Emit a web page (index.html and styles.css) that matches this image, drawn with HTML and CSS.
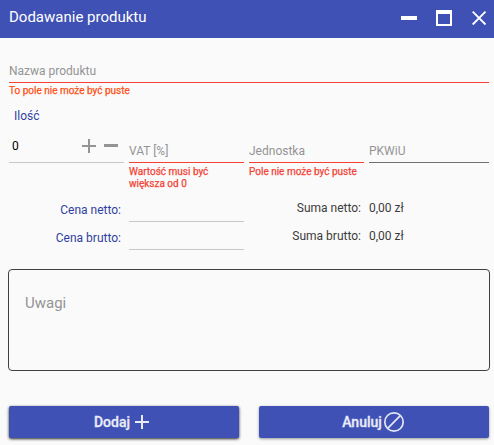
FILE: index.html
```html
<!DOCTYPE html>
<html lang="pl">
<head>
<meta charset="utf-8">
<title>Dodawanie produktu</title>
<link rel="stylesheet" href="styles.css">
</head>
<body>
<header class="titlebar">
  <h1>Dodawanie produktu</h1>
  <svg class="window-icons" width="90" height="20" viewBox="0 0 90 20" fill="none" stroke="#fff">
    <path d="M1 10h16" stroke-width="4"/>
    <path d="M37 4V17h14V4" stroke-width="2"/><path d="M36 4h16" stroke-width="4"/>
    <path d="M72.7 3.7l12.8 12.8M85.5 3.7l-12.8 12.8" stroke-width="1.8"/>
  </svg>
</header>
<main>
  <section class="name">
    <div class="control invalid"><span>Nazwa produktu</span></div>
    <p class="error orange">To pole nie może być puste</p>
  </section>
  <div class="quantity-label">Ilość</div>
  <section class="fields">
    <div class="control light quantity">
      <span>0</span>
      <svg width="38" height="16" viewBox="0 0 38 16" stroke="#949494" fill="none">
        <path d="M1 8h14M8 1v14" stroke-width="2"/><path d="M23 7.5h14" stroke-width="3"/>
      </svg>
    </div>
    <div><div class="control invalid"><span>VAT [%]</span></div><p class="error">Wartość musi być<br>większa od 0</p></div>
    <div><div class="control invalid"><span>Jednostka</span></div><p class="error">Pole nie może być puste</p></div>
    <div class="control dark"><span>PKWiU</span></div>
  </section>
  <section class="prices">
    <label>Cena netto:</label><div class="price-line"></div><span class="sum">Suma netto:</span><span class="value">0,00 zł</span>
    <label>Cena brutto:</label><div class="price-line"></div><span class="sum">Suma brutto:</span><span class="value">0,00 zł</span>
  </section>
  <div class="notes">Uwagi</div>
  <footer>
    <button class="add"><span>Dodaj</span><svg width="16" height="16" viewBox="0 0 16 16" fill="none" stroke="#e9ebf7" stroke-width="2"><path d="M1 8h14M8 1v14"/></svg></button>
    <button class="cancel"><span>Anuluj</span><svg width="22" height="22" viewBox="0 0 22 22" fill="none" stroke="#e4e7f6" stroke-width="1.7"><circle cx="11" cy="11" r="9.2"/><path d="M4.7 17.3L17.3 4.7"/></svg></button>
  </footer>
</main>
</body>
</html>
```
FILE: styles.css
```css
* { box-sizing: border-box; }
body {
  margin: 0;
  height: 445px;
  overflow: hidden;
  background: #fafafa;
  color: #3c3c3c;
  font: 12px/16px Roboto, sans-serif;
}
h1, p { margin: 0; }
.titlebar {
  height: 38px;
  padding: 0 4px 4px 9px;
  display: flex;
  align-items: center;
  justify-content: space-between;
  background: #3f51b5;
  color: #fff;
}
h1 { font-size: 15px; line-height: 20px; font-weight: 400; }
.window-icons { margin-top: 2px; }
main { padding: 0 5px 0 9px; }
.name { height: 68px; padding-top: 19px; }
.control {
  height: 26px;
  padding-top: 6px;
  color: #949494;
  border-bottom: 1px solid;
}
.control > span { display: block; }
.name .control { padding-top: 6px; }
.control.invalid { border-color: #f44336; }
.control.light { border-color: #c8c8c8; }
.control.dark { border-color: #707070; }
.error {
  padding-top: 3px;
  font-size: 10px;
  line-height: 12px;
  color: #f44336;
  -webkit-text-stroke: .25px currentColor;
}
.error.orange { padding-top: 2px; color: #ff5016; }
.quantity-label { height: 31px; padding: 2px 0 0 5px; color: #303f9f; }
.fields {
  display: grid;
  grid-template-columns: 115px 115px 115px 120px;
  column-gap: 5px;
  height: 63px;
  align-items: start;
}
.quantity {
  display: flex;
  justify-content: space-between;
  padding: 1px 5px 0 3px;
  color: #000;
}
.prices {
  display: grid;
  grid-template-columns: 115px 115px 115px 120px;
  grid-template-rows: 28px 28px;
  column-gap: 5px;
  height: 69px;
  line-height: 16px;
}
.prices label, .sum { padding-right: 3px; text-align: right; }
.prices label { padding-top: 2px; color: #303f9f; }
.price-line { height: 22px; border-bottom: 1px solid #c8c8c8; }
.notes {
  height: 102px;
  margin: 0 -1px;
  padding: 23px 16px;
  border: 1px solid #404040;
  border-radius: 4px;
  color: #949494;
  font-size: 15px;
  line-height: 20px;
}
footer { display: flex; justify-content: space-between; margin-top: 35px; }
button {
  display: flex;
  align-items: center;
  justify-content: center;
  height: 32px;
  padding: 0;
  border: 0;
  border-radius: 2px;
  background: #3f51b5;
  color: #e9ebf7;
  font: 500 14px/20px Roboto, sans-serif;
  -webkit-text-stroke: .3px currentColor;
  box-shadow: 0 1px 3px rgba(0, 0, 0, .4);
}
.add { width: 230px; gap: 4px; padding-right: 4px; box-shadow: 0 1px 3px rgba(0, 0, 0, .85); }
.cancel { width: 230px; gap: 1px; padding-right: 1px; }
```
